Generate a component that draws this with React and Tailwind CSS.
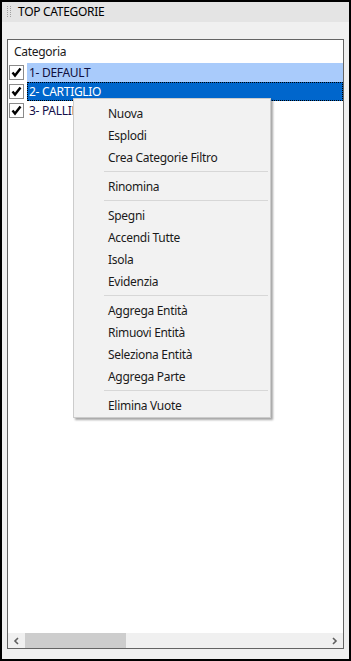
import React from 'react';

const font = { fontFamily: '"Noto Sans", "Open Sans", Arial, sans-serif' };

const rows = [
  { id: 1, label: '1- DEFAULT', state: 'hover' },
  { id: 2, label: '2- CARTIGLIO', state: 'selected' },
  { id: 3, label: '3- PALLINI', state: 'none' },
];

const menu = [
  ['Nuova', 'Esplodi', 'Crea Categorie Filtro'],
  ['Rinomina'],
  ['Spegni', 'Accendi Tutte', 'Isola', 'Evidenzia'],
  ['Aggrega Entità', 'Rimuovi Entità', 'Seleziona Entità', 'Aggrega Parte'],
  ['Elimina Vuote'],
];

function CheckBox() {
  return (
    <div className="flex h-[15px] w-[15px] shrink-0 items-center justify-center border border-[#8a8a8a] bg-white">
      <svg width="11" height="11" viewBox="0 0 11 11">
        <path d="M1.5 5.5 L4 8.5 L9.5 1.5" fill="none" stroke="#000" strokeWidth="2.4" />
      </svg>
    </div>
  );
}

function Grip() {
  return (
    <svg width="5" height="12" viewBox="0 0 5 12" className="shrink-0">
      {[0, 2, 4, 6, 8, 10].map((y) => (
        <g key={y}>
          <rect x="0" y={y} width="1" height="1" fill="#a0a0a0" />
          <rect x="3" y={y} width="1" height="1" fill="#a0a0a0" />
        </g>
      ))}
    </svg>
  );
}

export default function App() {
  return (
    <div className="relative h-[661px] w-[351px] overflow-hidden bg-black p-[2px] text-[12px] tracking-[-0.3px]" style={font}>
      <div className="flex h-full flex-col bg-[#f0f0f0]">
        {/* title bar */}
        <div className="flex h-[20px] items-center gap-[6px] bg-[#e4e4e4] pl-[5px] text-black">
          <Grip />
          <span>TOP CATEGORIE</span>
        </div>

        {/* tree panel */}
        <div className="mx-[5px] mb-[10px] mt-[17px] flex flex-1 flex-col border border-[#646464] bg-white">
          <div className="flex h-[23px] items-center pl-[6px] pt-[1px] text-[#1a1a1a]">Categoria</div>
          {rows.map((r) => (
            <div key={r.id} className="flex h-[19px] items-center pl-[1px]">
              <CheckBox />
              <div
                className={
                  r.state === 'hover'
                    ? 'ml-[3px] flex h-full flex-1 items-center bg-[#a9cbfb] pl-[2px] pt-[1px] text-[#101040]'
                    : r.state === 'selected'
                    ? 'ml-[3px] flex h-full flex-1 items-center border border-dotted border-black bg-[#0066cc] pl-[1px] text-white'
                    : 'ml-[3px] flex h-full flex-1 items-center pl-[2px] pt-[1px] text-[#14104a]'
                }
              >
                {r.label}
              </div>
            </div>
          ))}
          <div className="flex-1" />
          {/* horizontal scrollbar */}
          <div className="flex h-[15px] items-center bg-[#f0f0f0]">
            <div className="flex w-[17px] items-center justify-center">
              <svg width="7" height="8" viewBox="0 0 7 8">
                <path d="M5 1 L2 4 L5 7" fill="none" stroke="#606060" strokeWidth="1.6" />
              </svg>
            </div>
            <div className="h-[15px] w-[101px] bg-[#cdcdcd]" />
            <div className="flex-1" />
            <div className="flex w-[17px] items-center justify-center">
              <svg width="7" height="8" viewBox="0 0 7 8">
                <path d="M2 1 L5 4 L2 7" fill="none" stroke="#606060" strokeWidth="1.6" />
              </svg>
            </div>
          </div>
        </div>
      </div>

      {/* context menu */}
      <div className="absolute left-[73px] top-[98px] w-[198px] border border-[#cccccc] bg-[#f2f2f2] pb-[1px] pt-[3px] text-[#1a1a1a] shadow-[2px_2px_2px_rgba(0,0,0,0.35)]">
        {menu.map((group, gi) => (
          <div key={gi}>
            {gi > 0 && (
              <div className="flex h-[7px] items-center pl-[30px] pr-[2px]">
                <div className="h-px w-full bg-[#d7d7d7]" />
              </div>
            )}
            {group.map((item) => (
              <div key={item} className="flex h-[22px] items-center pl-[34px] pt-[1px]">
                {item}
              </div>
            ))}
          </div>
        ))}
      </div>
    </div>
  );
}
